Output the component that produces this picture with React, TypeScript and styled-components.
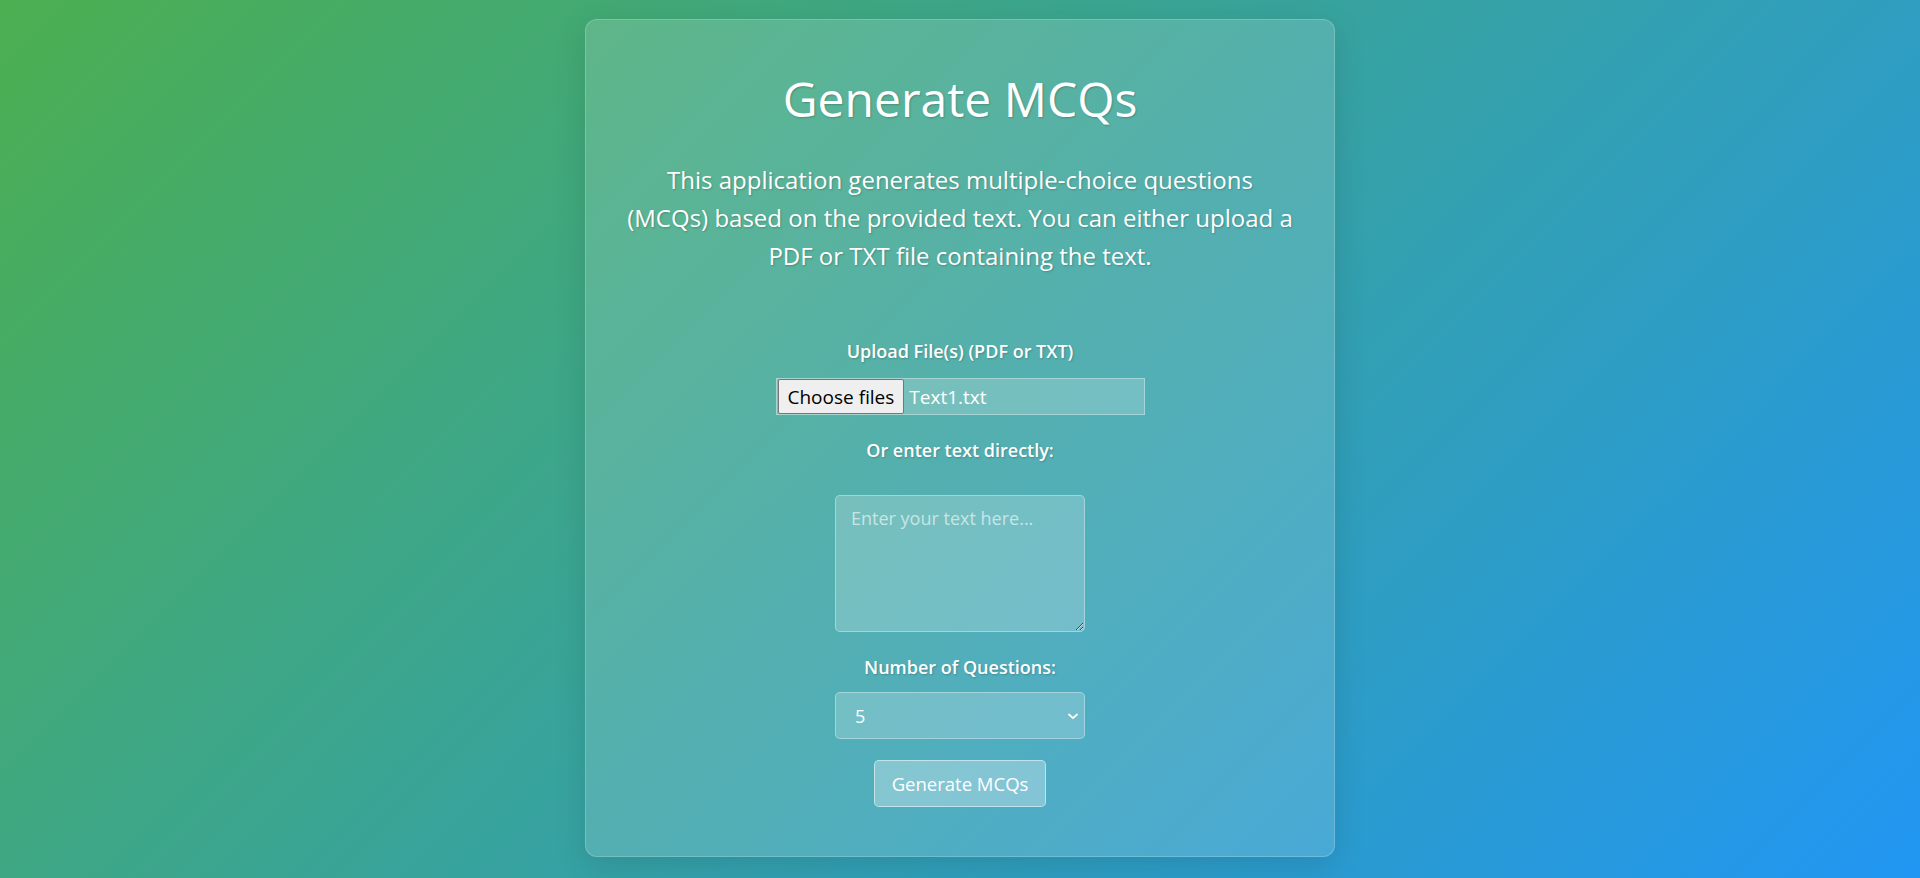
import { useState } from 'react';
import styled, { createGlobalStyle } from 'styled-components';

const GlobalStyle = createGlobalStyle`
  html, body {
    margin: 0;
    padding: 0;
  }

  body {
    min-height: 100vh;
    font-family: 'Segoe UI', 'Open Sans', 'Noto Sans', sans-serif;
    color: #fff;
    background: linear-gradient(135deg, #4caf50, #2196f3);
    background-attachment: fixed;
  }
`;

const SPage = styled.div`
  display: flex;
  justify-content: center;
  padding: 19px 0 21px;
`;

const SCard = styled.div`
  box-sizing: border-box;
  width: 750px;
  padding: 47px 30px 49px;
  display: flex;
  flex-direction: column;
  align-items: center;
  background: rgba(255, 255, 255, 0.15);
  border: 1px solid rgba(255, 255, 255, 0.2);
  border-radius: 12px;
  box-shadow: 0 8px 32px rgba(0, 0, 0, 0.12);
  text-shadow: 1px 1px 2px rgba(0, 0, 0, 0.2);
`;

const STitle = styled.h1`
  margin: 0 0 30px;
  font-size: 48px;
  font-weight: 400;
  line-height: 64px;
`;

const SIntro = styled.p`
  margin: 0 0 64px;
  font-size: 24px;
  line-height: 38px;
  text-align: center;
`;

const SForm = styled.form`
  display: flex;
  flex-direction: column;
  align-items: center;
`;

const SLabel = styled.label<{ $gap: number }>`
  display: block;
  margin-bottom: ${({ $gap }) => $gap}px;
  font-size: 18px;
  font-weight: 600;
  line-height: 24px;
`;

const SFilePicker = styled.label`
  box-sizing: border-box;
  display: flex;
  align-items: center;
  width: 369px;
  height: 37px;
  margin-bottom: 23px;
  padding: 0 1px;
  background: rgba(255, 255, 255, 0.2);
  border: 1px solid rgba(255, 255, 255, 0.35);
  cursor: pointer;

  input {
    display: none;
  }
`;

const SFileButton = styled.span`
  box-sizing: border-box;
  height: 35px;
  padding: 0 9px;
  display: flex;
  align-items: center;
  font-size: 19px;
  color: #000;
  text-shadow: none;
  background: #efefef;
  border: 1px solid #767676;
  border-radius: 2px;
`;

const SFileName = styled.span`
  margin-left: 5px;
  font-size: 19px;
  text-shadow: none;
`;

const STextArea = styled.textarea`
  box-sizing: border-box;
  width: 250px;
  height: 137px;
  margin-bottom: 23px;
  padding: 10px 15px;
  font-family: inherit;
  font-size: 18px;
  color: #fff;
  background: rgba(255, 255, 255, 0.2);
  border: 1px solid rgba(255, 255, 255, 0.35);
  border-radius: 5px;
  outline: none;

  &::placeholder {
    color: rgba(255, 255, 255, 0.6);
  }
`;

const SSelectWrap = styled.div`
  position: relative;
  width: 250px;
  margin-bottom: 21px;

  svg {
    position: absolute;
    right: 6px;
    top: 50%;
    transform: translateY(-50%);
    pointer-events: none;
  }
`;

const SSelect = styled.select`
  box-sizing: border-box;
  width: 100%;
  height: 47px;
  padding: 0 19px;
  appearance: none;
  font-family: inherit;
  font-size: 18px;
  color: #fff;
  background: rgba(255, 255, 255, 0.2);
  border: 1px solid rgba(255, 255, 255, 0.35);
  border-radius: 5px;
  outline: none;

  option {
    color: #000;
  }
`;

const SButton = styled.button`
  box-sizing: border-box;
  width: 172px;
  height: 47px;
  font-family: inherit;
  font-size: 18.5px;
  color: #fff;
  background: rgba(255, 255, 255, 0.3);
  border: 1px solid rgba(255, 255, 255, 0.5);
  border-radius: 5px;
  cursor: pointer;
`;

const App = () => {
  const [fileName, setFileName] = useState('Text1.txt');
  const [count, setCount] = useState('5');

  return (
    <>
      <GlobalStyle />
      <SPage>
        <SCard>
          <STitle>Generate MCQs</STitle>
          <SIntro>
            This application generates multiple-choice questions
            <br />
            (MCQs) based on the provided text. You can either upload a
            <br />
            PDF or TXT file containing the text.
          </SIntro>

          <SForm onSubmit={(e) => e.preventDefault()}>
            <SLabel $gap={15}>Upload File(s) (PDF or TXT)</SLabel>
            <SFilePicker>
              <input
                type='file'
                multiple
                accept='.pdf,.txt'
                onChange={(e) => setFileName(Array.from(e.target.files ?? []).map((f) => f.name).join(', '))}
              />
              <SFileButton>Choose files</SFileButton>
              <SFileName>{fileName}</SFileName>
            </SFilePicker>

            <SLabel $gap={33}>Or enter text directly:</SLabel>
            <STextArea placeholder='Enter your text here...' />

            <SLabel $gap={13}>Number of Questions:</SLabel>
            <SSelectWrap>
              <SSelect value={count} onChange={(e) => setCount(e.target.value)}>
                {[5, 10, 15, 20].map((n) => (
                  <option key={n} value={n}>
                    {n}
                  </option>
                ))}
              </SSelect>
              <svg width='12' height='12' viewBox='0 0 12 12' fill='none'>
                <path d='M2 4.5 6 8.2l4-3.7' stroke='#fff' strokeWidth='1.8' strokeLinecap='round' strokeLinejoin='round' />
              </svg>
            </SSelectWrap>

            <SButton type='submit'>Generate MCQs</SButton>
          </SForm>
        </SCard>
      </SPage>
    </>
  );
};

export default App;
